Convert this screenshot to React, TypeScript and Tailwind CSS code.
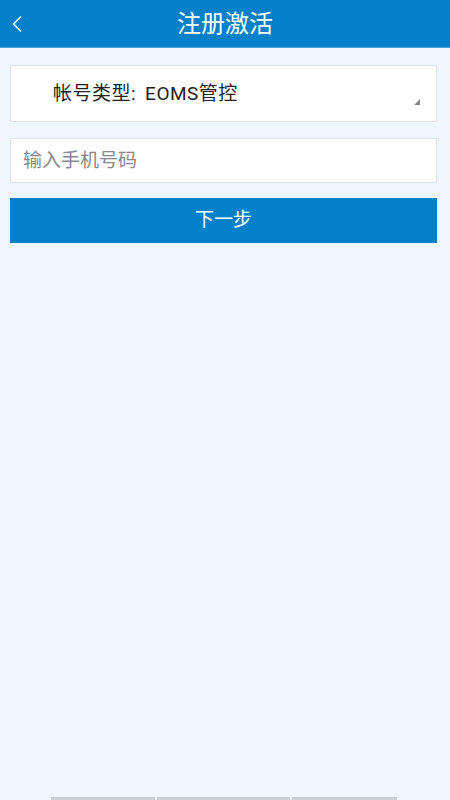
import { ChevronLeft } from "lucide-react";

export default function App() {
  return (
    <div
      className="relative flex h-[800px] w-[450px] flex-col overflow-hidden bg-[#eff6fe]"
      style={{ fontFamily: '"Roboto", "Noto Sans CJK SC", sans-serif' }}
    >
      {/* 顶部导航 */}
      <div className="relative flex h-[48px] items-center justify-center border-b border-[#4aa3dc] bg-[#0281ca]">
        <ChevronLeft className="absolute left-[3px] top-[10px] h-[28px] w-[28px] text-white" strokeWidth={1.4} />
        <span className="text-[24px] text-white">注册激活</span>
      </div>

      <div className="flex flex-col pl-[10px] pr-[13px] pt-[17px]">
        {/* 帐号类型 */}
        <div className="relative flex h-[57px] items-center border border-[#dfe3e6] bg-white pl-[42px] pt-[2px]">
          <span className="text-[19px] tracking-[0.5px] text-[#222]">
            帐号类型:<span className="ml-[9px]">EOMS管控</span>
          </span>
          <span className="absolute right-[16px] bottom-[16px] h-0 w-0 border-b-[6px] border-l-[6px] border-b-[#888] border-l-transparent" />
        </div>

        {/* 手机号码 */}
        <input
          className="mt-[16px] h-[45px] border border-[#dfe3e6] bg-white px-[12px] text-[19px] text-[#222] outline-none placeholder:text-[#888]"
          placeholder="输入手机号码"
        />

        <button className="mt-[15px] h-[45px] bg-[#0281ca] text-[19px] text-white">下一步</button>
      </div>

      {/* 底部 */}
      <div className="absolute bottom-0 left-[51px] flex h-[3px] gap-[2px]">
        <div className="w-[104px] bg-[#c9d0d6]" />
        <div className="w-[133px] bg-[#c9d0d6]" />
        <div className="w-[105px] bg-[#c9d0d6]" />
      </div>
    </div>
  );
}
